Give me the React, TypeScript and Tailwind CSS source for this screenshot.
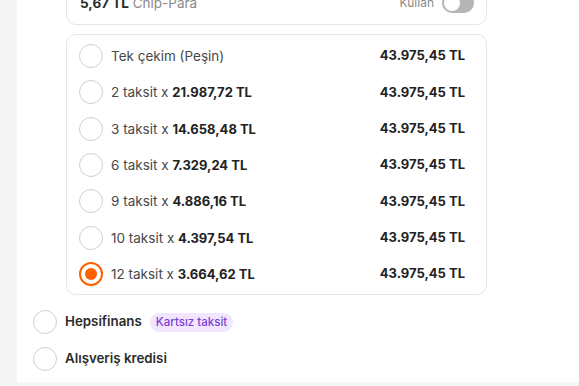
import React from "react";

const rows: { label: string; amount?: string; selected?: boolean }[] = [
  { label: "Tek çekim (Peşin)" },
  { label: "2 taksit x ", amount: "21.987,72 TL" },
  { label: "3 taksit x ", amount: "14.658,48 TL" },
  { label: "6 taksit x ", amount: "7.329,24 TL" },
  { label: "9 taksit x ", amount: "4.886,16 TL" },
  { label: "10 taksit x ", amount: "4.397,54 TL" },
  { label: "12 taksit x ", amount: "3.664,62 TL", selected: true },
];

function Radio({ selected }: { selected?: boolean }) {
  if (selected) {
    return (
      <span className="flex h-[24px] w-[24px] shrink-0 items-center justify-center rounded-full border-2 border-[#ff6000] bg-white">
        <span className="h-[12px] w-[12px] rounded-full bg-[#ff6000]" />
      </span>
    );
  }
  return <span className="h-[24px] w-[24px] shrink-0 rounded-full border-[1.5px] border-[#cfcfcf] bg-white" />;
}

export default function App() {
  return (
    <div
      className="h-[386px] w-[579px] overflow-hidden bg-[#f5f5f5]"
      style={{ fontFamily: "Inter, 'Noto Sans', sans-serif" }}
    >
      <div className="ml-[17px] h-[382px] overflow-hidden bg-white pl-[16px]">
        <div className="-mt-[20px] ml-[33px] w-[421px]">
          <div className="flex h-[45px] items-center justify-between rounded-[10px] border border-[#e6e6e6] pl-[13px] pr-[12px] pt-[1px]">
            <span className="text-[13.5px] text-[#8a8a8a]">
              <span className="font-bold text-[#2b2b2b]">5,67 TL</span> Chip-Para
            </span>
            <span className="flex items-center gap-[8px]">
              <span className="text-[12px] text-[#8a8a8a]">Kullan</span>
              <span className="flex h-[20px] w-[32px] items-center rounded-full bg-[#b5b5b5] p-[2px]">
                <span className="h-[16px] w-[16px] rounded-full bg-white" />
              </span>
            </span>
          </div>
          <div className="mt-[9px] rounded-[10px] border border-[#e6e6e6] pb-[2px] pl-[12px] pr-[21px] pt-[3px]">
            {rows.map((r, i) => (
              <div key={i} className="flex h-[36.33px] items-center">
                <Radio selected={r.selected} />
                <span className="ml-[8px] text-[13.5px] text-[#484848]">
                  {r.label}
                  {r.amount && <span className="text-[13px] font-bold text-[#222]">{r.amount}</span>}
                </span>
                <span className="ml-auto text-[13px] font-bold text-[#222]">43.975,45 TL</span>
              </div>
            ))}
          </div>
        </div>
        <div className="mt-[9px] flex h-[36px] items-center">
          <Radio />
          <span className="ml-[8px] text-[13.3px] font-semibold text-[#2b2b2b]">Hepsifinans</span>
          <span className="ml-[8px] rounded-full bg-[#f1e6fd] px-[6px] py-[1px] text-[11.5px] font-medium text-[#7b3fd4]">
            Kartsız taksit
          </span>
        </div>
        <div className="mt-[1px] flex h-[36px] items-center">
          <Radio />
          <span className="ml-[8px] text-[13.3px] font-semibold text-[#2b2b2b]">Alışveriş kredisi</span>
        </div>
      </div>
    </div>
  );
}
